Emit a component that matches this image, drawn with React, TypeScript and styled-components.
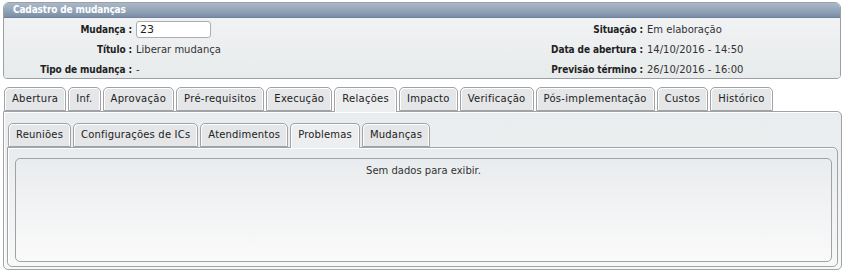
import React from "react";
import styled, { createGlobalStyle } from "styled-components";

const GlobalStyle = createGlobalStyle`
	html, body {
		margin: 0;
		padding: 0;
		background: #ffffff;
	}
	body {
		font-family: "DejaVu Sans", Verdana, sans-serif;
		font-size: 10px;
		color: #222;
	}
`;

const Page = styled.div`
	padding: 2px 5px 0 3px;
	width: 838px;
`;

const Panel = styled.section`
	border: 1px solid #9c9fa3;
	border-radius: 6px 6px 4px 4px;
	overflow: hidden;
`;

const PanelHeader = styled.h2`
	margin: 0;
	height: 14px;
	padding: 0 0 0 9px;
	background: linear-gradient(to bottom, #aab8c8, #93a4b8 55%, #7a8ea5);
	color: #ffffff;
	font-family: "DejaVu Sans Condensed", "DejaVu Sans", sans-serif;
	font-stretch: condensed;
	font-weight: bold;
	font-size: 10px;
	letter-spacing: -0.15px;
	line-height: 14px;
	border-bottom: 1px solid #6f8299;
`;

const InfoGrid = styled.div`
	display: grid;
	grid-template-columns: 128px 1fr auto 193px;
	grid-auto-rows: 20px;
	column-gap: 4px;
	padding: 1px 0 0;
	height: 59px;
	background: linear-gradient(to bottom, #f0f2f3, #e8ebec);
`;

const Label = styled.span`
	justify-self: end;
	align-self: center;
	font-family: "DejaVu Sans Condensed", "DejaVu Sans", sans-serif;
	font-stretch: condensed;
	font-weight: bold;
	letter-spacing: -0.1px;
	color: #222;
	white-space: nowrap;
`;

const Value = styled.span`
	align-self: center;
	color: #333;
	white-space: nowrap;
`;

const Input = styled.input`
	align-self: center;
	box-sizing: border-box;
	width: 75px;
	height: 17px;
	margin: 0;
	padding: 0 3px;
	border: 1px solid #a8aeb4;
	border-radius: 3px;
	background: #ffffff;
	font-family: "DejaVu Sans", sans-serif;
	font-size: 11px;
	color: #222;
`;

const TabBar = styled.div<{ $inset?: number }>`
	display: flex;
	gap: 2px;
	padding-left: ${ p => p.$inset ?? 0 }px;
	position: relative;
	z-index: 1;
	margin-bottom: -1px;
`;

const Tab = styled.div<{ $active?: boolean; $spacing?: number }>`
	box-sizing: border-box;
	height: ${ p => p.$active ? 25 : 24 }px;
	padding: 0 7px;
	border: 1px solid #a0a2a5;
	border-bottom: ${ p => p.$active ? "none" : "1px solid #a0a2a5" };
	border-radius: 5px 5px 0 0;
	background: ${ p => p.$active ? "#eceeef" : "#e4e6e8" };
	box-shadow: inset 1px 1px 0 #ffffff, inset -1px 0 0 #ffffff;
	letter-spacing: ${ p => p.$spacing ?? 0 }px;
	line-height: 22px;
	color: #222;
	white-space: nowrap;
`;

const TabPanel = styled.div`
	border: 1px solid #a0a2a5;
	border-radius: 0 5px 5px 5px;
	background: linear-gradient(to bottom, #e9ecee, #f7f8f8);
	box-shadow: inset 1px 1px 0 #ffffff;
`;

const MainTabs = styled.div`
	margin-top: 8px;
	padding-left: 1px;
	width: 838px;

	> ${ TabPanel } {
		margin-left: -1px;
		padding: 11px 3px 2px 3px;
	}
`;

const SubTabPanel = styled(TabPanel)`
	padding: 10px 5px 4px 7px;
`;

const EmptyBox = styled.div`
	height: 96px;
	padding-top: 6px;
	border: 1px solid #a0a2a5;
	border-radius: 5px;
	background: linear-gradient(to bottom, #e9ecee, #fafafa);
	text-align: center;
	color: #333;
`;

const mainTabs = [
	"Abertura", "Inf.", "Aprovação", "Pré-requisitos", "Execução", "Relações",
	"Impacto", "Verificação", "Pós-implementação", "Custos", "Histórico",
];

const subTabs = ["Reuniões", "Configurações de ICs", "Atendimentos", "Problemas", "Mudanças"];

const App = () => {
	return(
		<Page>
			<GlobalStyle />
			<Panel>
				<PanelHeader>{ "Cadastro de mudanças" }</PanelHeader>
				<InfoGrid>
					<Label>{ "Mudança :" }</Label>
					<Input defaultValue="23" />
					<Label>{ "Situação :" }</Label>
					<Value>{ "Em elaboração" }</Value>

					<Label>{ "Título :" }</Label>
					<Value>{ "Liberar mudança" }</Value>
					<Label>{ "Data de abertura :" }</Label>
					<Value>{ "14/10/2016 - 14:50" }</Value>

					<Label>{ "Tipo de mudança :" }</Label>
					<Value>{ "-" }</Value>
					<Label>{ "Previsão término :" }</Label>
					<Value>{ "26/10/2016 - 16:00" }</Value>
				</InfoGrid>
			</Panel>
			<MainTabs>
				<TabBar>
					{ mainTabs.map(t => <Tab key={ t } $spacing={ 0.28 } $active={ t === "Relações" }>{ t }</Tab>) }
				</TabBar>
				<TabPanel>
					<TabBar $inset={ 1 }>
						{ subTabs.map(t => <Tab key={ t } $spacing={ 0.18 } $active={ t === "Problemas" }>{ t }</Tab>) }
					</TabBar>
					<SubTabPanel>
						<EmptyBox>{ "Sem dados para exibir." }</EmptyBox>
					</SubTabPanel>
				</TabPanel>
			</MainTabs>
		</Page>
	);
};

export default App;
